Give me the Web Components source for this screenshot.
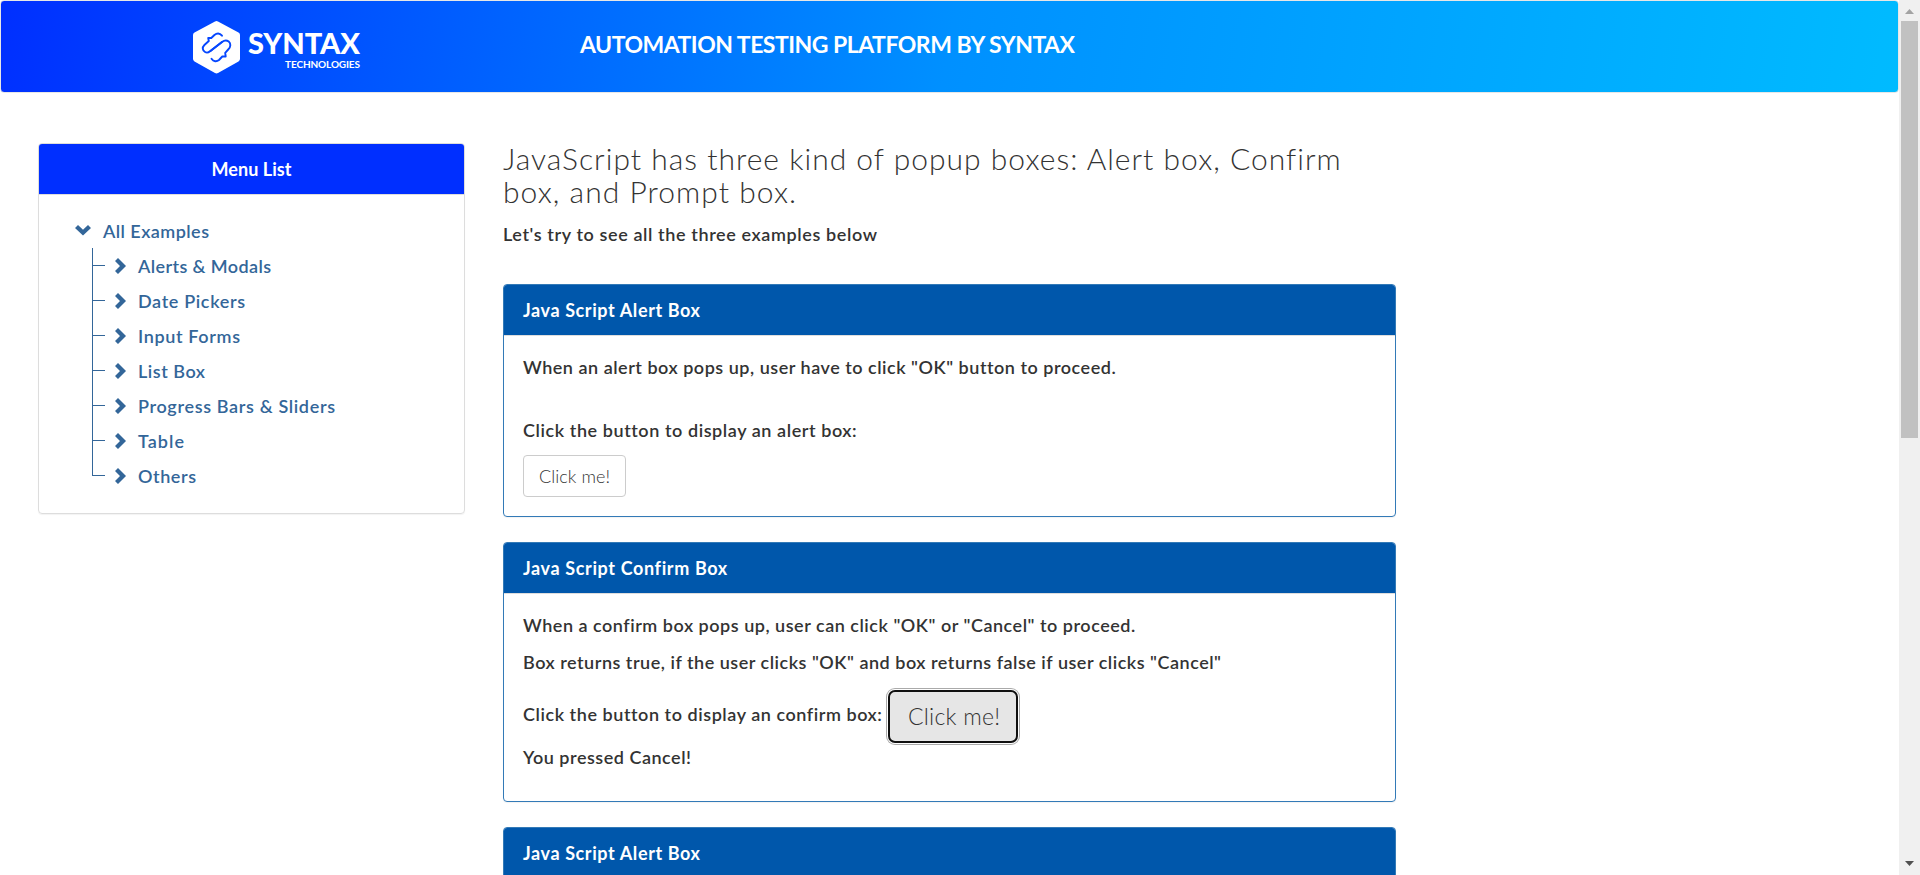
<!DOCTYPE html>
<html lang="en">
<head>
<meta charset="utf-8">
<title>Syntax - Automation Testing Platform</title>
<style>
html,body{margin:0;height:100%;overflow:hidden;background:#fff}
body{font-family:Lato,"Open Sans",sans-serif;font-size:18px;line-height:26px;color:#333}
</style>
</head>
<body>
<demo-page></demo-page>
<script>
const define=(name,html,after)=>{
  const t=document.createElement('template');t.innerHTML=html;
  customElements.define(name,class extends HTMLElement{
    constructor(){super();this.attachShadow({mode:'open'}).append(t.content.cloneNode(true));}
    connectedCallback(){if(after)after(this,this.shadowRoot);}
  });
};

// One line of text whose tracking is spread to a given width.
define('fit-line',`<style>:host{display:block;white-space:nowrap}span{display:inline-block}</style><span><slot></slot></span>`,(el,r)=>{
  const s=r.querySelector('span'),w=+el.getAttribute('w'),n=el.textContent.length;
  s.style.letterSpacing=((w-s.getBoundingClientRect().width)/(n-1)).toFixed(3)+'px';
});

define('syntax-logo',`<style>:host{display:flex;color:#fff}svg{display:block;width:47px;height:54px}
.w{display:flex;flex-direction:column;align-items:flex-end;margin:10px 0 0 8px}
.a{font-weight:900;font-size:29px;line-height:26px}.b{font-weight:700;font-size:10px;line-height:12px;margin-top:2px}</style>
<svg viewBox="0 0 47 54"><path fill="#fff" d="M23.5 1Q24.3 1 25 1.4L45.5 12.6Q47 13.5 47 15V39Q47 40.5 45.5 41.4L25 53Q23.5 53.8 22 53L1.5 41.4Q0 40.5 0 39V15Q0 13.5 1.5 12.6L22 1.4Q22.7 1 23.5 1Z"/>
<g fill="none" stroke="#0546ff" stroke-width="1.9" stroke-linecap="round" stroke-linejoin="round"><path d="M29 15.7C26.5 12.6 23.7 13.1 21.4 15L18.3 18H15.2L15.8 21L11.4 25C8.8 27.5 9.6 30.7 12 32C13.6 33 15.7 32.4 17 31.2L29 22"/><path d="M18.5 38.8C20.5 41.8 23.7 41.9 26 40L29.3 36.5H32.7L32.2 32.8L35.2 29.5C38 26.8 37.9 23.4 35.7 21.6C33.6 20 31.2 20.3 29 22L17.5 31"/></g></svg>
<div class="w"><fit-line class="a" w="112">SYNTAX</fit-line><fit-line class="b" w="75">TECHNOLOGIES</fit-line></div>`);

define('top-bar',`<style>:host{display:flex;box-sizing:border-box;height:93px;border:1px solid #e7e7e7;border-radius:4px;background:linear-gradient(100deg,#002fff,#0090ff 50%,#00bbff);align-items:flex-start;color:#fff}
syntax-logo{margin:19px 0 0 192px;width:387px}
.t{font-size:23px;line-height:28px;font-weight:700;margin-top:29px}</style>
<syntax-logo></syntax-logo><fit-line class="t" w="495">AUTOMATION TESTING PLATFORM BY SYNTAX</fit-line>`);

define('menu-item',`<style>:host{display:flex;height:35px;line-height:36px;color:#369;font-weight:600;position:relative}
svg{display:block;width:16px;height:16px;margin:10px 0 0 0;flex:none}
.tick{width:13px;height:18px;border-left:1px solid #369;border-bottom:1px solid #369;box-sizing:border-box;flex:none}
.rail{position:absolute;left:0;top:0;height:35px;border-left:1px solid #369}
:host([last]) .rail,:host([root]) .rail,:host([root]) .tick{display:none}
.r{margin-left:10px;width:11px}:host([root]) .r{display:none}.d{display:none}:host([root]) .d{display:block}
.label{margin-left:12px}</style>
<i class="rail"></i><i class="tick"></i>
<svg class="r" viewBox="0 0 11 16"><path fill="#369" d="M3 0L11 8L3 16L0 13L5 8L0 3Z"/></svg>
<svg class="d" viewBox="0 0 16 16"><path fill="#369" d="M0 5L3 2L8 6.8L13 2L16 5L8 12.6Z"/></svg>
<div class="label"><slot></slot></div>`);

define('menu-panel',`<style>:host{display:block;box-sizing:border-box;width:427px;height:371px;border:1px solid #ddd;border-radius:4px;box-shadow:0 1px 1px rgba(0,0,0,.05)}
header{display:flex;justify-content:center;padding:12px 0;background:#002fff;color:#fff;font-weight:700;border-bottom:1px solid #ddd;border-radius:3px 3px 0 0}
.tree{padding:18px 0 0 36px}.kids{padding-left:17px}</style>
<header><fit-line w="80">Menu List</fit-line></header>
<div class="tree"><menu-item root><fit-line w="106">All Examples</fit-line></menu-item>
<div class="kids"><menu-item><fit-line w="133">Alerts &amp; Modals</fit-line></menu-item><menu-item><fit-line w="107">Date Pickers</fit-line></menu-item><menu-item><fit-line w="102">Input Forms</fit-line></menu-item><menu-item><fit-line w="67">List Box</fit-line></menu-item><menu-item><fit-line w="197">Progress Bars &amp; Sliders</fit-line></menu-item><menu-item><fit-line w="46">Table</fit-line></menu-item><menu-item last><fit-line w="58">Others</fit-line></menu-item></div></div>`);

define('box-panel',`<style>:host{display:block;box-sizing:border-box;width:893px;border:1px solid #337ab7;border-radius:4px;margin-bottom:25px;box-shadow:0 1px 1px rgba(0,0,0,.05)}
header{padding:12px 19px;background:#0057ab;color:#fff;font-weight:700;border-bottom:1px solid #ddd;border-radius:3px 3px 0 0}
.b{padding:18px 19px 0}</style>
<header><slot name="title"></slot></header><div class="b"><slot></slot></div>`);

define('click-button',`<style>:host{display:block}button{display:block;box-sizing:border-box;margin:0;padding:0 0 0 15px;width:103px;height:42px;border:1px solid #ccc;border-radius:4px;background:#fff;font:300 18px/40px Lato,sans-serif;color:#333;text-align:left}
:host([focused]) button{width:130px;height:53px;border:2px solid #101010;border-radius:7px;background:#e6e6e6;font-size:23px;line-height:47px;padding-left:18px;box-shadow:0 0 0 1px #fff,0 0 0 2px #aaa}</style>
<button><slot></slot></button>`);

define('demo-page',`<style>:host{display:flex;width:1920px;height:875px;overflow:hidden}
.page{width:1899px;height:875px;overflow:hidden}
.cols{display:flex;padding:50px 0 0 38px;gap:38px}
h3{margin:-1px 0 13px;font-weight:300;font-size:30px;line-height:33px}
.lead{margin-bottom:37px}.m{font-weight:600}
.row{display:flex;gap:7px;margin-top:15px}.row .m{width:358px;margin-top:11px}</style>
<div class="page"><top-bar></top-bar>
<div class="cols"><menu-panel></menu-panel>
<main><h3><fit-line w="837">JavaScript has three kind of popup boxes: Alert box, Confirm</fit-line><fit-line w="293">box, and Prompt box.</fit-line></h3>
<fit-line class="m lead" w="374">Let's try to see all the three examples below</fit-line>
<box-panel style="height:233px"><fit-line slot="title" w="177">Java Script Alert Box</fit-line>
<fit-line class="m" w="592">When an alert box pops up, user have to click "OK" button to proceed.</fit-line>
<fit-line class="m" style="margin:37px 0 12px" w="333">Click the button to display an alert box:</fit-line>
<click-button><fit-line w="71">Click me!</fit-line></click-button></box-panel>
<box-panel style="height:260px"><fit-line slot="title" w="204">Java Script Confirm Box</fit-line>
<fit-line class="m" w="612">When a confirm box pops up, user can click "OK" or "Cancel" to proceed.</fit-line>
<fit-line class="m" style="margin-top:11px" w="698">Box returns true, if the user clicks "OK" and box returns false if user clicks "Cancel"</fit-line>
<div class="row"><fit-line class="m" w="358">Click the button to display an confirm box:</fit-line><click-button focused><fit-line w="92">Click me!</fit-line></click-button></div>
<fit-line class="m" style="margin-top:1px" w="168">You pressed Cancel!</fit-line></box-panel>
<box-panel style="height:233px"><fit-line slot="title" w="177">Java Script Alert Box</fit-line></box-panel>
</main></div></div>
<scroll-bar></scroll-bar>`);

define('scroll-bar',`<style>:host{display:flex;flex-direction:column;align-items:center;width:21px;height:875px;background:#f0f0f0}
svg{display:block;width:9px;height:5px}.up{margin:9px 0 7px}.th{width:17px;height:417px;background:#c1c1c1;margin-bottom:423px}</style>
<svg class="up" viewBox="0 0 9 5"><path fill="#a3a3a3" d="M0 5L4.5 0L9 5Z"/></svg><div class="th"></div><svg viewBox="0 0 9 5"><path fill="#505050" d="M0 0L4.5 5L9 0Z"/></svg>`);
</script>
</body>
</html>
